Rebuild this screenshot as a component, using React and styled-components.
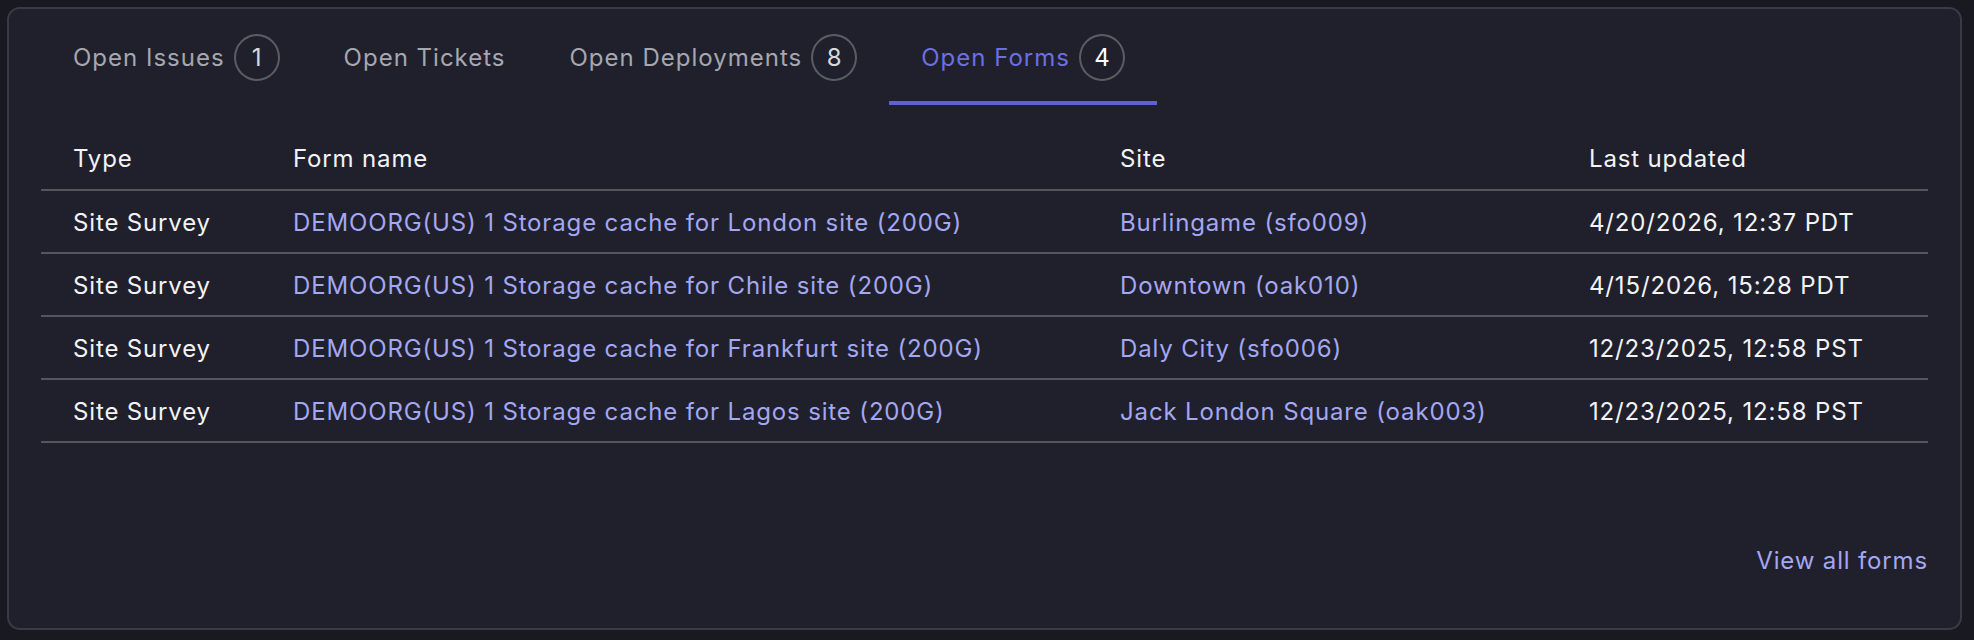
import React, { useState } from "react";
import styled, { createGlobalStyle } from "styled-components";

const GlobalStyle = createGlobalStyle`
  html, body {
    margin: 0;
    padding: 0;
    background-color: #191a21;
  }
  body {
    font-family: Inter, "Noto Sans", "Liberation Sans", sans-serif;
    letter-spacing: 0.85px;
    -webkit-font-smoothing: antialiased;
  }
`;

const Page = styled.div`
  padding: 7px 12px 0 7px;
`;

const Card = styled.section`
  box-sizing: border-box;
  height: 623px;
  display: flex;
  flex-direction: column;
  background-color: #1f202c;
  border: 2px solid #393a46;
  border-radius: 13px;
  padding: 0 32px;
`;

const TabBar = styled.nav`
  display: flex;
`;

const Tab = styled.button`
  box-sizing: border-box;
  height: 96px;
  display: flex;
  align-items: center;
  gap: 9px;
  padding: 5px 32px 0;
  background: none;
  border: none;
  border-bottom: 4px solid ${({ $active }) => ($active ? "#5d60d9" : "transparent")};
  color: ${({ $active }) => ($active ? "#6c6fe2" : "#a6a7af")};
  font-family: inherit;
  font-size: 24px;
  letter-spacing: 1px;
  line-height: 36px;
  cursor: pointer;
`;

const Badge = styled.span`
  box-sizing: border-box;
  width: 46px;
  height: 47px;
  display: inline-flex;
  align-items: center;
  justify-content: center;
  border: 2px solid #5c5c62;
  border-radius: 50%;
  color: ${({ $active }) => ($active ? "#ffffff" : "#d8d8dc")};
  font-size: 24px;
  letter-spacing: 0;
`;

const Table = styled.div`
  margin-top: 23px;
  font-size: 24px;
  line-height: 36px;
`;

const Row = styled.div`
  display: grid;
  grid-template-columns: 220px 827px 469px 1fr;
  height: 63px;
  box-sizing: border-box;
  align-items: center;
  border-bottom: 2px solid #55565b;
`;

const Cell = styled.div`
  padding: ${({ $head }) => ($head ? "0" : "3px")} 0 0 32px;
  white-space: nowrap;
  color: ${({ $link }) => ($link ? "#a4a7f1" : "#f3f3f5")};
`;

const Footer = styled.div`
  margin-top: auto;
  padding-bottom: 49px;
  display: flex;
  justify-content: flex-end;
`;

const ViewAll = styled.a`
  color: #a4a7f1;
  font-size: 24px;
  line-height: 36px;
  text-decoration: none;
`;

const tabs = [
  { label: "Open Issues", count: 1 },
  { label: "Open Tickets" },
  { label: "Open Deployments", count: 8 },
  { label: "Open Forms", count: 4 },
];

const columns = ["Type", "Form name", "Site", "Last updated"];

const forms = [
  {
    type: "Site Survey",
    name: "DEMOORG(US) 1 Storage cache for London site (200G)",
    site: "Burlingame (sfo009)",
    updated: "4/20/2026, 12:37 PDT",
  },
  {
    type: "Site Survey",
    name: "DEMOORG(US) 1 Storage cache for Chile site (200G)",
    site: "Downtown (oak010)",
    updated: "4/15/2026, 15:28 PDT",
  },
  {
    type: "Site Survey",
    name: "DEMOORG(US) 1 Storage cache for Frankfurt site (200G)",
    site: "Daly City (sfo006)",
    updated: "12/23/2025, 12:58 PST",
  },
  {
    type: "Site Survey",
    name: "DEMOORG(US) 1 Storage cache for Lagos site (200G)",
    site: "Jack London Square (oak003)",
    updated: "12/23/2025, 12:58 PST",
  },
];

const App = () => {
  const [active, setActive] = useState(3);

  return (
    <Page>
      <GlobalStyle />
      <Card>
        <TabBar>
          {tabs.map((tab, i) => (
            <Tab key={tab.label} $active={i === active} onClick={() => setActive(i)}>
              {tab.label}
              {tab.count !== undefined && <Badge $active={i === active}>{tab.count}</Badge>}
            </Tab>
          ))}
        </TabBar>

        <Table>
          <Row>
            {columns.map((col) => (
              <Cell key={col} $head>
                {col}
              </Cell>
            ))}
          </Row>
          {forms.map((form) => (
            <Row key={form.name}>
              <Cell>{form.type}</Cell>
              <Cell $link>{form.name}</Cell>
              <Cell $link>{form.site}</Cell>
              <Cell>{form.updated}</Cell>
            </Row>
          ))}
        </Table>

        <Footer>
          <ViewAll href="#">View all forms</ViewAll>
        </Footer>
      </Card>
    </Page>
  );
};

export default App;
